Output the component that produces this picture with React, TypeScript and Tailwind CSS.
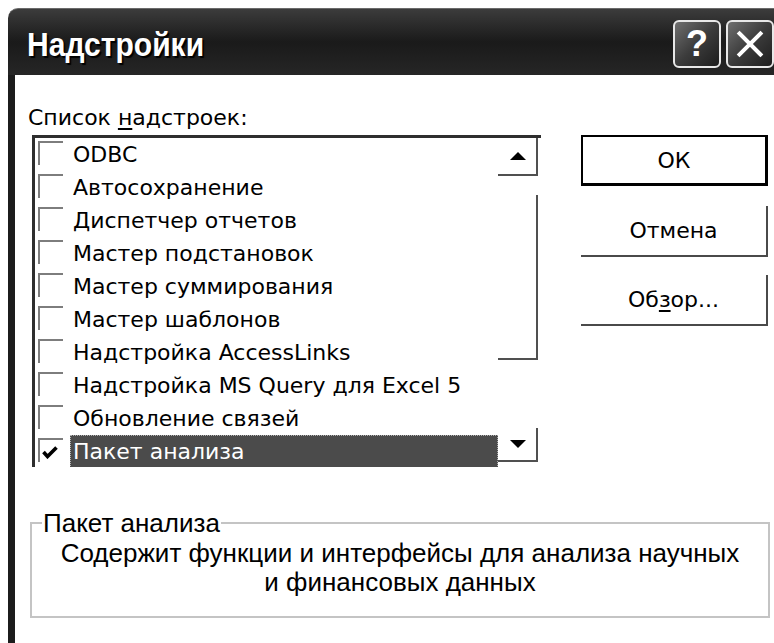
import React from "react";

const addins = [
  "ODBC",
  "Автосохранение",
  "Диспетчер отчетов",
  "Мастер подстановок",
  "Мастер суммирования",
  "Мастер шаблонов",
  "Надстройка AccessLinks",
  "Надстройка MS Query для Excel 5",
  "Обновление связей",
  "Пакет анализа",
];

const uiFont = { fontFamily: '"DejaVu Sans", Verdana, sans-serif' };
const captionFont = { fontFamily: '"Liberation Sans", Arial, sans-serif' };

function CheckBox({ checked }: { checked: boolean }) {
  return (
    <div className="mt-[3px] h-[24px] w-[25px] shrink-0 self-start border-l-2 border-t-2 border-[#7d7d7d] bg-white relative">
      {checked && (
        <svg viewBox="0 0 16 13" className="absolute left-[2px] top-[6px] h-[13px] w-[16px]">
          <path d="M1.5 6 L5.5 10.5 L14.5 1.5" fill="none" stroke="#000" strokeWidth="3.6" />
        </svg>
      )}
    </div>
  );
}

function Arrow({ up }: { up: boolean }) {
  return (
    <svg viewBox="0 0 16 8" className="h-[8px] w-[16px]">
      <polygon points={up ? "8,0 16,8 0,8" : "0,0 16,0 8,8"} fill="#000" />
    </svg>
  );
}

function CaptionButton({ children }: { children: React.ReactNode }) {
  return (
    <div className="h-[48px] w-[48px] shrink-0 rounded-[6px] border-2 border-[#e8e8e8] bg-gradient-to-br from-[#707070] via-[#3c3c3c] to-[#1e1e1e] flex items-center justify-center">
      {children}
    </div>
  );
}

export default function App() {
  return (
    <div className="w-[774px] h-[643px] bg-white overflow-hidden" style={uiFont}>
      <div className="ml-[8px] mt-[8px] h-[635px] flex flex-col">
        {/* caption bar */}
        <div className="h-[67px] shrink-0 rounded-tl-[10px] border-t border-[#6a6a6a] bg-gradient-to-b from-[#3c3c3c] via-[#1a1a1a] to-[#262626] flex items-start">
          <span
            className="ml-[19px] mt-[18px] inline-block origin-left scale-x-[0.91] text-[33px] font-bold leading-[36px] text-white [text-shadow:2px_2px_1px_#000]"
            style={captionFont}
          >
            Надстройки
          </span>
          <div className="ml-auto flex gap-[5px] pt-[11px]">
            <CaptionButton>
              <span className="text-[36px] font-bold leading-none text-white" style={captionFont}>
                ?
              </span>
            </CaptionButton>
            <CaptionButton>
              <svg viewBox="0 0 24 24" className="h-[28px] w-[28px]">
                <path d="M3 3 L21 21 M21 3 L3 21" stroke="#fff" strokeWidth="3.4" strokeLinecap="square" />
              </svg>
            </CaptionButton>
          </div>
        </div>

        {/* dialog body */}
        <div className="flex-1 border-l-[7px] border-[#1c1c1c] bg-white text-black">
          <div className="flex pt-[31px]">
            <div className="flex flex-col">
              <div className="ml-[13px] h-[24px] text-[22px] leading-[24px]">
                Список <span className="underline underline-offset-[3px]">н</span>адстроек:
              </div>
              {/* add-in list */}
              <div className="ml-[17px] mt-[5px] h-[332px] w-[509px] overflow-hidden border-l-[3px] border-t-[3px] border-[#2e2e2e] flex">
                <div className="flex-1 flex flex-col">
                  {addins.map((name, i) => {
                    const selected = i === addins.length - 1;
                    return (
                      <div key={name} className="h-[33px] shrink-0 flex pl-[3px]">
                        <CheckBox checked={selected} />
                        <div
                          className={
                            selected
                              ? "ml-[7px] flex-1 flex items-center pl-[3px] bg-[#4b4b4b] text-white outline-dotted outline-1 -outline-offset-1 outline-[#b0b0b0]"
                              : "ml-[7px] flex-1 flex items-center pl-[3px]"
                          }
                        >
                          <span className="text-[22px] leading-[26px] whitespace-nowrap">{name}</span>
                        </div>
                      </div>
                    );
                  })}
                </div>
                {/* vertical scroll bar */}
                <div className="w-[43px] shrink-0 pr-[3px] flex flex-col">
                  <div className="h-[38px] shrink-0 border-b-2 border-r-2 border-[#505050] flex items-center justify-center pl-[1px]">
                    <Arrow up />
                  </div>
                  <div className="h-[19px] shrink-0" />
                  <div className="h-[165px] shrink-0 border-b-2 border-r-2 border-[#505050]" />
                  <div className="h-[68px] shrink-0" />
                  <div className="h-[34px] shrink-0 border-b-2 border-r-2 border-[#505050] flex items-center justify-center pl-[1px]">
                    <Arrow up={false} />
                  </div>
                </div>
              </div>
            </div>

            {/* command buttons */}
            <div className="ml-[40px] mt-[29px] w-[187px] flex flex-col gap-[20px] text-[22px]">
              <div className="h-[51px] border-2 border-black border-r-[3px] border-b-[3px] flex items-center justify-center">
                ОК
              </div>
              <div className="h-[51px] border-b-2 border-r-2 border-[#4a4a4a] flex items-center justify-center">
                Отмена
              </div>
              <div className="-mt-[2px] h-[51px] border-b-2 border-r-2 border-[#4a4a4a] flex items-center justify-center">
                <span>
                  Об<span className="underline underline-offset-[3px]">з</span>ор...
                </span>
              </div>
            </div>
          </div>

          {/* description group */}
          <fieldset
            className="ml-[15px] mt-[43px] w-[740px] h-[108px] border-2 border-[#c4c4c4]"
            style={captionFont}
          >
            <legend className="ml-[10px] px-[1px] text-[26px] leading-[26px]">Пакет анализа</legend>
            <div className="mt-[3px] text-center text-[26px] leading-[29px]">
              Содержит функции и интерфейсы для анализа научных
              <br />
              и финансовых данных
            </div>
          </fieldset>
        </div>
      </div>
    </div>
  );
}
